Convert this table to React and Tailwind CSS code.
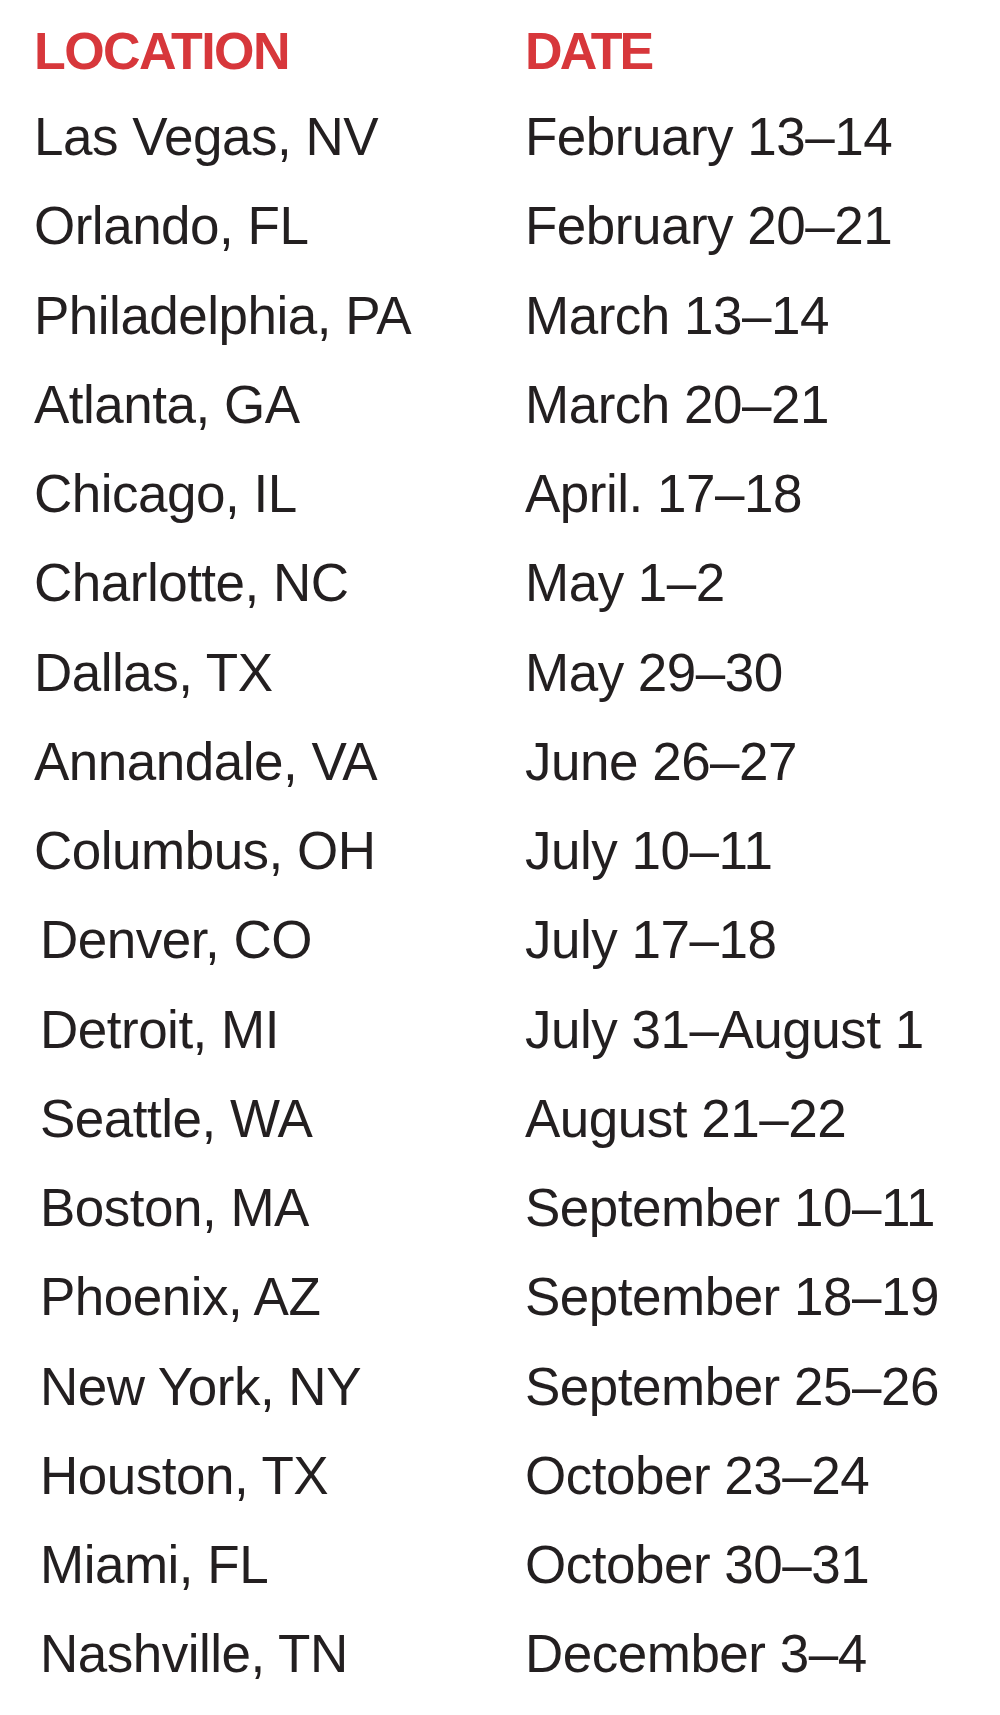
const rows = [
  ['Las Vegas, NV', 'February 13–14'],
  ['Orlando, FL', 'February 20–21'],
  ['Philadelphia, PA', 'March 13–14'],
  ['Atlanta, GA', 'March 20–21'],
  ['Chicago, IL', 'April. 17–18'],
  ['Charlotte, NC', 'May 1–2'],
  ['Dallas, TX', 'May 29–30'],
  ['Annandale, VA', 'June 26–27'],
  ['Columbus, OH', 'July 10–11'],
  ['Denver, CO', 'July 17–18', true],
  ['Detroit, MI', 'July 31–August 1', true],
  ['Seattle, WA', 'August 21–22', true],
  ['Boston, MA', 'September 10–11', true],
  ['Phoenix, AZ', 'September 18–19', true],
  ['New York, NY', 'September 25–26', true],
  ['Houston, TX', 'October 23–24', true],
  ['Miami, FL', 'October 30–31', true],
  ['Nashville, TN', 'December 3–4', true],
];

const HEAD = 'text-[52px] font-bold leading-[82px] text-[#d7373b]';
const CELL = 'text-[53px] leading-[89.25px] tracking-[-0.5px] text-[#231f20] whitespace-nowrap';

export default function App() {
  return (
    <div className="min-h-[1715px] w-[1000px] bg-white pl-[34px] pt-[10px] font-['Liberation_Sans',Arial,sans-serif]">
      <div className="grid grid-cols-[491px_1fr]">
        <div className={`${HEAD} tracking-[-1.6px]`}>LOCATION</div>
        <div className={`${HEAD} tracking-[-2.8px]`}>DATE</div>
        {rows.map(([place, date, shifted]) => (
          <div key={place} className="contents">
            <div className={`${CELL} ${shifted ? 'pl-[6px]' : ''}`}>{place}</div>
            <div className={CELL}>{date}</div>
          </div>
        ))}
      </div>
    </div>
  );
}
